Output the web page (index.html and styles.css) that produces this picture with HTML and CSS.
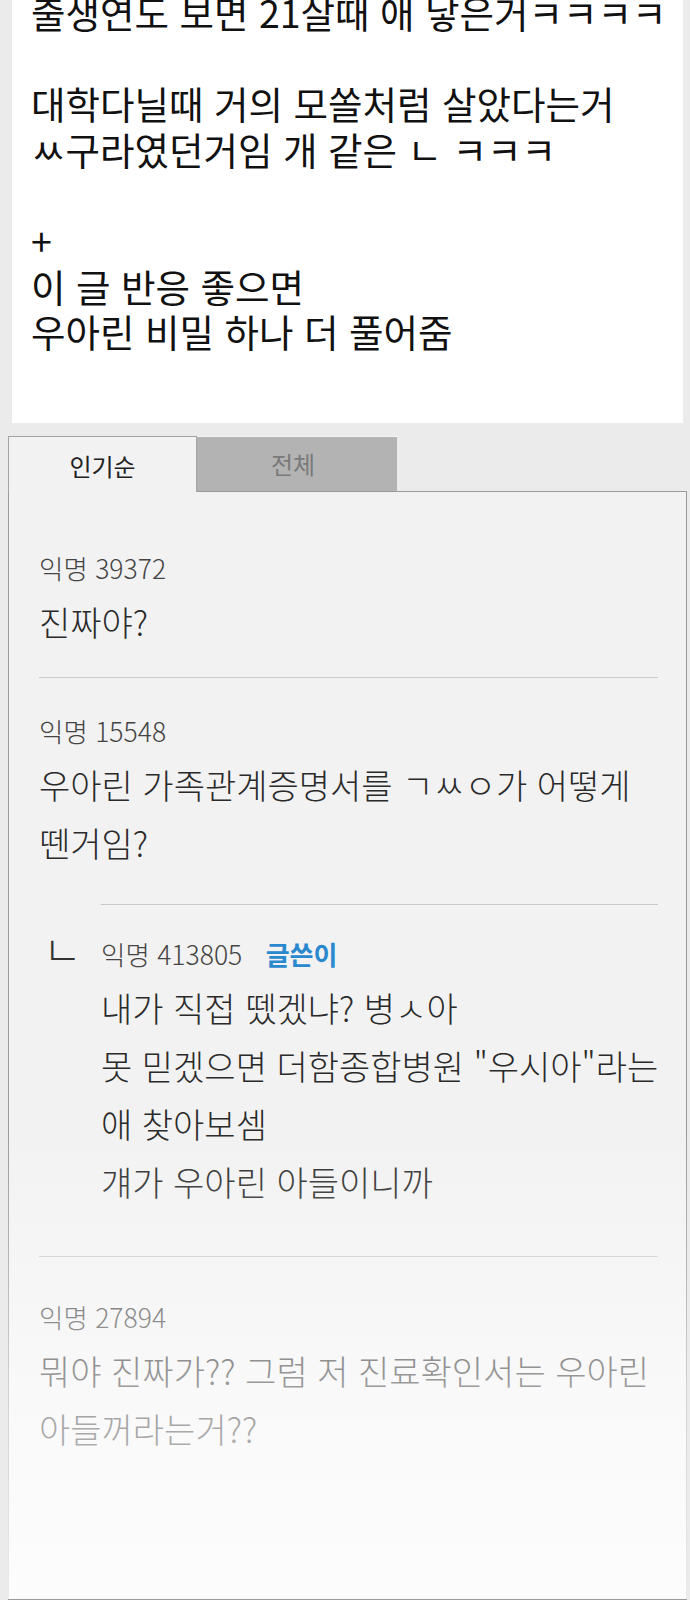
FILE: index.html
```html
<!DOCTYPE html>
<html lang="ko">
<head>
  <meta charset="UTF-8">
  <meta name="viewport" content="width=device-width, initial-scale=1.0">
  <title>게시글</title>
  <link rel="stylesheet" href="styles.css">
</head>
<body>
  <div class="post">
    <p>출생연도 보면 21살때 애 낳은거ㅋㅋㅋㅋ</p>
    <p>&nbsp;</p>
    <p>대학다닐때 거의 모쏠처럼 살았다는거</p>
    <p>ㅆ구라였던거임 개 같은 ㄴ ㅋㅋㅋ</p>
    <p>&nbsp;</p>
    <p>+</p>
    <p>이 글 반응 좋으면</p>
    <p>우아린 비밀 하나 더 풀어줌</p>
  </div>

  <div class="board">
    <div class="tabs">
      <div class="tab active">인기순</div>
      <div class="tab">전체</div>
      <div class="tab-fill"></div>
    </div>

    <div class="comments">
      <div class="comment first">
        <div class="meta">익명 39372</div>
        <div class="text">진짜야?</div>
      </div>

      <div class="comment group">
        <div class="comment-main">
          <div class="meta">익명 15548</div>
          <div class="text">우아린 가족관계증명서를 ㄱㅆㅇ가 어떻게<br>뗀거임?</div>
        </div>
        <div class="reply">
          <span class="reply-mark">ㄴ</span>
          <div class="reply-body">
            <div class="meta">익명 413805 <span class="writer">글쓴이</span></div>
            <div class="text">내가 직접 뗐겠냐? 병ㅅ아<br>못 믿겠으면 더함종합병원 "우시아"라는<br>애 찾아보셈<br>걔가 우아린 아들이니까</div>
          </div>
        </div>
      </div>

      <div class="comment last">
        <div class="meta">익명 27894</div>
        <div class="text">뭐야 진짜가?? 그럼 저 진료확인서는 우아린<br>아들꺼라는거??</div>
      </div>

      <div class="fade"></div>
    </div>
  </div>
</body>
</html>
```

FILE: styles.css
```css
body {
  margin: 0;
  height: 1600px;
  overflow: hidden;
  display: flex;
  flex-direction: column;
  background: #ebebeb;
  font-family: "Noto Sans CJK KR", "Noto Sans", sans-serif;
  color: #2a2a2a;
}

.post {
  margin: -11px 7px 0 12px;
  padding: 0 0 69px 19px;
  background: #ffffff;
  color: #111;
  font-size: 37.5px;
  line-height: 45.6px;
}
.post p {
  margin: 0;
  white-space: nowrap;
}

.board {
  flex: 1;
  display: flex;
  flex-direction: column;
  margin: 13px 3px 0 8px;
}

.tabs {
  display: flex;
  height: 56px;
}
.tab {
  width: 200px;
  box-sizing: border-box;
  background: #b3b3b3;
  border-top: 1px solid #f4f4f4;
  border-bottom: 1px solid #9a9a9a;
  color: #7a7a7a;
  font-size: 24px;
  line-height: 54px;
  text-align: center;
  padding-right: 8px;
}
.tab.active {
  width: 189px;
  background: #f2f2f2;
  border: 1px solid #a4a4a4;
  border-bottom: none;
  color: #222;
  padding: 2px 0 0;
  line-height: 53px;
}
.tab-fill {
  flex: 1;
  border-bottom: 1px solid #9a9a9a;
}

.comments {
  flex: 1;
  position: relative;
  background: #f2f2f2;
  border: 1px solid #9a9a9a;
  border-top: none;
  padding: 0 28px 0 30px;
}

.comment {
  padding: 35px 0 26px;
  border-bottom: 1px solid #c9c9c9;
}
.comment.first {
  padding-top: 58px;
}
.comment.group {
  padding: 35px 0 45px;
}
.comment.last {
  padding-top: 42px;
  border-bottom: none;
}
.comment-main {
  padding-bottom: 32px;
}

.meta {
  font-size: 26.5px;
  line-height: 36px;
  color: #444;
  margin-bottom: 7px;
  font-weight: 300;
}
.text {
  font-size: 34px;
  line-height: 58px;
  font-weight: 300;
  white-space: nowrap;
}

.writer {
  margin-left: 16px;
  color: #2a88cf;
  font-size: 26px;
  font-weight: 700;
}

.reply {
  display: flex;
}
.reply-mark {
  width: 62px;
  flex-shrink: 0;
  box-sizing: border-box;
  padding: 26px 0 0 4px;
  font-size: 42px;
  line-height: 36px;
  color: #333;
  font-weight: 300;
}
.reply-body {
  flex: 1;
  border-top: 1px solid #c9c9c9;
  padding-top: 31px;
}

.fade {
  position: absolute;
  left: -1px;
  right: -1px;
  bottom: 0;
  height: 470px;
  background: linear-gradient(rgba(255,255,255,0) 0%, rgba(255,255,255,0.15) 15%, rgba(255,255,255,0.38) 40%, rgba(255,255,255,0.55) 56%, rgba(255,255,255,0.8) 100%);
}
```
